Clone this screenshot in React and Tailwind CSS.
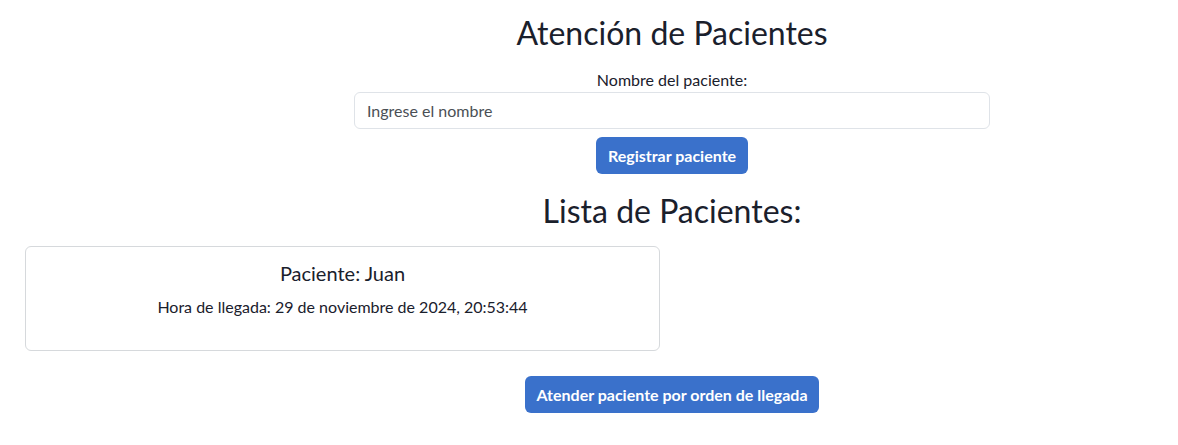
import React, { useState } from "react";

export default function App() {
    const [nombre, setNombre] = useState("");
    const pacientes = [{ nombre: "Juan", llegada: "29 de noviembre de 2024, 20:53:44" }];

    return (
        <div className="w-full h-[445px] overflow-hidden bg-white text-[#1a202c]" style={{ fontFamily: "Lato, 'Open Sans', sans-serif" }}>
            <div className="w-[1294px] ml-[25px] flex flex-col items-center pt-[13px]">
                <h1 className="text-[32px] leading-[40px] font-normal">Atención de Pacientes</h1>

                <label className="mt-[15px] text-base leading-6">Nombre del paciente:</label>
                <input
                    className="w-[636px] h-[37px] px-3 text-base border border-[#dfe3e8] rounded-md outline-none placeholder:text-[#4a4f55]"
                    placeholder="Ingrese el nombre"
                    value={nombre}
                    onChange={(e) => setNombre(e.target.value)}
                />
                <button className="mt-[8px] h-[37px] px-3 bg-[#3a71cb] text-white text-base font-bold rounded-md">
                    Registrar paciente
                </button>

                <h2 className="mt-[17px] text-[32px] leading-[40px] font-normal">Lista de Pacientes:</h2>

                <div className="mt-[15px] w-full grid grid-cols-2 gap-6">
                    {pacientes.map((p) => (
                        <div key={p.nombre} className="h-[105px] border border-[#d6d9dc] rounded-md flex flex-col items-center pt-[12px]">
                            <div className="text-[20px] leading-[28px]">Paciente: {p.nombre}</div>
                            <div className="mt-[8px] text-base leading-6">Hora de llegada: {p.llegada}</div>
                        </div>
                    ))}
                </div>

                <button className="mt-[25px] h-[37px] px-[11px] bg-[#3a71cb] text-white text-base font-bold rounded-md">
                    Atender paciente por orden de llegada
                </button>
            </div>
        </div>
    );
}
